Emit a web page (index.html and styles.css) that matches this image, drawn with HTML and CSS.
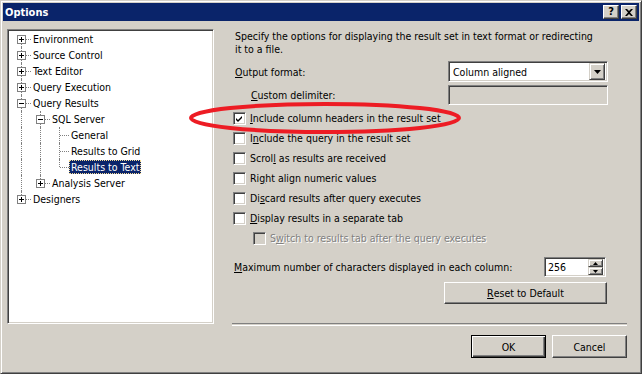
FILE: index.html
```html
<!DOCTYPE html>
<html lang="en">
<head>
  <meta charset="UTF-8" />
  <title>Options</title>
  <link rel="stylesheet" href="styles.css">
</head>
<body>
  <div class="window">
    <div class="titlebar">
      <span class="title">Options</span>
      <div class="caption-btns">
        <span class="cap-btn help">?</span>
        <span class="cap-btn">
          <svg width="8" height="7" viewBox="0 0 8 7"><path d="M0 0h2l2 2 2-2h2L5 3.5 8 7H6L4 5 2 7H0l3-3.5z" fill="#000"/></svg>
        </span>
      </div>
    </div>

    <div class="body">
      <div class="tree">
        <div class="node"><span class="g first"><i class="exp plus"></i></span><span class="lbl">Environment</span></div>
        <div class="node"><span class="g tee"><i class="exp plus"></i></span><span class="lbl">Source Control</span></div>
        <div class="node"><span class="g tee"><i class="exp plus"></i></span><span class="lbl">Text Editor</span></div>
        <div class="node"><span class="g tee"><i class="exp plus"></i></span><span class="lbl">Query Execution</span></div>
        <div class="node"><span class="g tee"><i class="exp minus"></i></span><span class="lbl">Query Results</span></div>
        <div class="node"><span class="g pipe"></span><span class="g tee"><i class="exp minus"></i></span><span class="lbl">SQL Server</span></div>
        <div class="node"><span class="g pipe"></span><span class="g pipe"></span><span class="g tee"></span><span class="lbl">General</span></div>
        <div class="node"><span class="g pipe"></span><span class="g pipe"></span><span class="g tee"></span><span class="lbl">Results to Grid</span></div>
        <div class="node"><span class="g pipe"></span><span class="g pipe"></span><span class="g elbow"></span><span class="lbl selected">Results to Text</span></div>
        <div class="node"><span class="g pipe"></span><span class="g elbow"><i class="exp plus"></i></span><span class="lbl">Analysis Server</span></div>
        <div class="node"><span class="g elbow"><i class="exp plus"></i></span><span class="lbl">Designers</span></div>
      </div>

      <div class="panel">
        <p class="desc">Specify the options for displaying the result set in text format or redirecting it to a file.</p>

        <div class="row format">
          <span class="label"><u>O</u>utput format:</span>
          <div class="combo">
            <span class="combo-text">Column aligned</span>
            <span class="drop-btn"><svg width="7" height="4" viewBox="0 0 7 4"><path d="M0 0h7L3.5 4z" fill="#000"/></svg></span>
          </div>
        </div>

        <div class="row delim">
          <span class="label indent"><u>C</u>ustom delimiter:</span>
          <div class="field disabled"></div>
        </div>

        <div class="checks">
          <div class="check-row"><span class="check on"><svg width="9" height="9" viewBox="0 0 9 9"><path d="M1 4l2 2 4-4v2l-4 4-2-2z" fill="#000"/></svg></span><span><u>I</u>nclude column headers in the result set</span></div>
          <div class="check-row"><span class="check"></span><span>I<u>n</u>clude the query in the result set</span></div>
          <div class="check-row"><span class="check"></span><span>Scrol<u>l</u> as results are received</span></div>
          <div class="check-row"><span class="check"></span><span>Ri<u>g</u>ht align numeric values</span></div>
          <div class="check-row"><span class="check"></span><span>Di<u>s</u>card results after query executes</span></div>
          <div class="check-row"><span class="check"></span><span><u>D</u>isplay results in a separate tab</span></div>
          <div class="check-row sub disabled"><span class="check"></span><span>S<u>w</u>itch to results tab after the query executes</span></div>
        </div>

        <div class="row maxchars">
          <span class="label"><u>M</u>aximum number of characters displayed in each column:</span>
          <div class="spin">
            <span class="spin-text">256</span>
            <span class="spin-btns">
              <span class="spin-btn"><svg width="5" height="3" viewBox="0 0 5 3"><path d="M2.5 0L5 3H0z" fill="#000"/></svg></span>
              <span class="spin-btn"><svg width="5" height="3" viewBox="0 0 5 3"><path d="M0 0h5L2.5 3z" fill="#000"/></svg></span>
            </span>
          </div>
        </div>

        <div class="reset-row">
          <span class="btn reset"><u>R</u>eset to Default</span>
        </div>

        <div class="separator"></div>

        <div class="actions">
          <span class="btn default">OK</span>
          <span class="btn">Cancel</span>
        </div>
      </div>
    </div>

    <svg class="annotation" width="290" height="44" viewBox="0 0 290 44">
      <ellipse cx="145" cy="22" rx="134" ry="14" fill="none" stroke="#ed1c24" stroke-width="4"/>
    </svg>
  </div>
</body>
</html>
```

FILE: styles.css
```css
body {
  margin: 0;
  background: #d4d0c8;
  font-family: "DejaVu Sans Condensed", "Liberation Sans", sans-serif;
  font-size: 10.5px;
  color: #000;
}

.window {
  position: relative;
  width: 642px;
  height: 374px;
  box-sizing: border-box;
  padding: 2px;
  background: #d4d0c8;
  border: 1px solid;
  border-color: #d4d0c8 #404040 #404040 #d4d0c8;
  box-shadow: inset 1px 1px #fff, inset -1px -1px #808080;
}

/* title bar */
.titlebar {
  height: 18px;
  background: #0a246a;
  display: flex;
  align-items: center;
  justify-content: space-between;
  padding: 0 2px 0 2px;
}

.title {
  color: #fff;
  font-weight: bold;
  font-size: 11px;
}

.caption-btns {
  display: flex;
  gap: 2px;
}

.cap-btn {
  width: 16px;
  height: 14px;
  box-sizing: border-box;
  background: #d4d0c8;
  border: 1px solid;
  border-color: #fff #404040 #404040 #fff;
  box-shadow: inset -1px -1px #808080;
  display: flex;
  align-items: center;
  justify-content: center;
}

.cap-btn.help {
  font-weight: bold;
  font-size: 11px;
  line-height: 12px;
}

/* main area */
.body {
  display: flex;
  padding: 8px 0 0 4px;
}

.tree {
  width: 207px;
  height: 295px;
  box-sizing: border-box;
  background: #fff;
  border: 1px solid;
  border-color: #808080 #fff #fff #808080;
  box-shadow: inset 1px 1px #404040, inset -1px -1px #d4d0c8;
  padding: 1px 0 0 4px;
}

.node {
  display: flex;
  height: 16px;
  align-items: center;
}

.g {
  position: relative;
  width: 19px;
  height: 16px;
  flex: none;
}

.g.pipe::before,
.g.tee::before,
.g.elbow::before,
.g.first::before {
  content: "";
  position: absolute;
  left: 9px;
  top: 0;
  height: 16px;
  border-left: 1px dotted #808080;
}

.g.elbow::before { height: 8px; }
.g.first::before { top: 8px; height: 8px; }

.g.tee::after,
.g.elbow::after,
.g.first::after {
  content: "";
  position: absolute;
  left: 10px;
  top: 8px;
  width: 9px;
  border-top: 1px dotted #808080;
}

.exp {
  position: absolute;
  z-index: 1;
  left: 5px;
  top: 4px;
  width: 9px;
  height: 9px;
  box-sizing: border-box;
  background: #fff;
  border: 1px solid #808080;
}

.exp::before,
.exp.plus::after {
  content: "";
  position: absolute;
  background: #000;
}

.exp::before { left: 1px; top: 3px; width: 5px; height: 1px; }
.exp.plus::after { left: 3px; top: 1px; width: 1px; height: 5px; }

.lbl {
  height: 14px;
  line-height: 12px;
  padding: 0 1px;
  box-sizing: border-box;
  border: 1px dotted transparent;
  white-space: nowrap;
}

.lbl.selected {
  background: #0a246a;
  color: #fff;
  border-color: #f5db95;
}

/* option panel */
.panel {
  width: 395px;
  margin-left: 18px;
  display: flex;
  flex-direction: column;
}

.desc {
  margin: 0;
  padding: 1px 26px 0 3px;
  line-height: 13px;
  height: 26px;
}

.row {
  display: flex;
  align-items: center;
  padding-left: 3px;
  padding-right: 19px;
}

.row .label { flex: 1; }
.label.indent { padding-left: 16px; }

.format { margin-top: 5px; height: 21px; }
.delim { margin-top: 3px; height: 20px; }

.combo,
.field,
.spin {
  box-sizing: border-box;
  border: 1px solid;
  border-color: #808080 #fff #fff #808080;
  box-shadow: inset 1px 1px #404040, inset -1px -1px #d4d0c8;
  background: #fff;
}

.combo {
  width: 160px;
  height: 21px;
  display: flex;
  align-items: center;
  justify-content: space-between;
  padding: 2px;
}

.combo-text { padding-left: 2px; }

.drop-btn {
  width: 16px;
  height: 17px;
  box-sizing: border-box;
  background: #d4d0c8;
  border: 1px solid;
  border-color: #d4d0c8 #404040 #404040 #d4d0c8;
  box-shadow: inset 1px 1px #fff, inset -1px -1px #808080;
  display: flex;
  align-items: center;
  justify-content: center;
}

.field {
  width: 160px;
  height: 20px;
}

.field.disabled { background: #d4d0c8; }

.checks { margin-top: 3px; }

.check-row {
  display: flex;
  align-items: center;
  height: 20px;
  gap: 4px;
  padding-left: 1px;
}

.check-row.sub { padding-left: 21px; }

.check {
  width: 13px;
  height: 13px;
  box-sizing: border-box;
  background: #fff;
  border: 1px solid;
  border-color: #808080 #fff #fff #808080;
  box-shadow: inset 1px 1px #404040, inset -1px -1px #d4d0c8;
  display: flex;
  align-items: center;
  justify-content: center;
  flex: none;
}

.check-row.disabled { color: #808080; text-shadow: 1px 1px #fff; }
.check-row.disabled .check { background: #d4d0c8; }

.maxchars { margin-top: 9px; height: 20px; padding-left: 2px; padding-right: 21px; }

.spin {
  width: 62px;
  height: 20px;
  display: flex;
  align-items: center;
  justify-content: space-between;
  padding: 2px;
}

.spin-text { padding-left: 1px; }

.spin-btns {
  display: flex;
  flex-direction: column;
  width: 15px;
  height: 16px;
}

.spin-btn {
  flex: 1;
  box-sizing: border-box;
  background: #d4d0c8;
  border: 1px solid;
  border-color: #d4d0c8 #404040 #404040 #d4d0c8;
  box-shadow: inset 1px 1px #fff, inset -1px -1px #808080;
  display: flex;
  align-items: center;
  justify-content: center;
}

.btn {
  display: flex;
  align-items: center;
  justify-content: center;
  box-sizing: border-box;
  background: #d4d0c8;
  border: 1px solid;
  border-color: #fff #404040 #404040 #fff;
  box-shadow: inset -1px -1px #808080;
}

.reset-row {
  display: flex;
  justify-content: flex-end;
  margin-top: 5px;
  padding-right: 20px;
}

.btn.reset { width: 163px; height: 22px; }

.separator {
  margin-top: 19px;
  height: 1px;
  border-top: 1px solid #808080;
  border-bottom: 1px solid #fff;
}

.actions {
  display: flex;
  justify-content: flex-end;
  gap: 6px;
  margin-top: 9px;
}

.actions .btn { width: 75px; height: 23px; }

.btn.default {
  border-color: #000;
  box-shadow: inset 1px 1px #fff, inset -1px -1px #404040, inset -2px -2px #808080;
}

/* red marker drawn over the dialog */
.annotation {
  position: absolute;
  left: 179px;
  top: 95px;
  pointer-events: none;
}
```
